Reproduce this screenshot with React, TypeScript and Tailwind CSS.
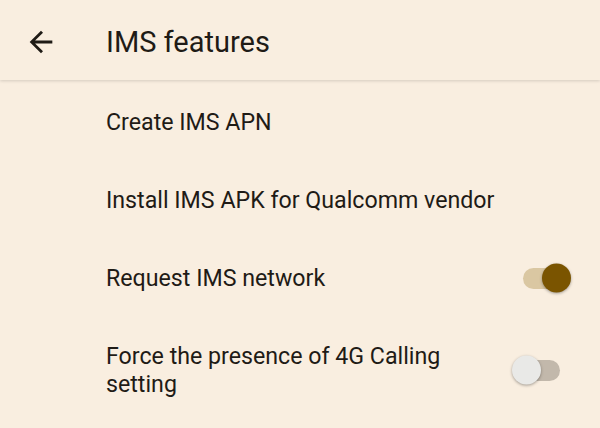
import React from 'react';

const rows = [
  { label: 'Create IMS APN' },
  { label: 'Install IMS APK for Qualcomm vendor' },
  { label: 'Request IMS network', toggle: true, on: true },
  { label: 'Force the presence of 4G Calling setting', toggle: true, on: false },
];

const Toggle: React.FC<{ on: boolean }> = ({ on }) => (
  <div className="relative w-[37px] h-[21px] shrink-0">
    <div className={`absolute inset-0 rounded-full ${on ? 'bg-[#dac7a2]' : 'bg-[#c2b8ab]'}`} />
    <div
      className={`absolute top-1/2 -translate-y-1/2 w-[29px] h-[29px] rounded-full shadow-[0_1px_3px_rgba(0,0,0,0.35)] ${
        on ? 'right-[-11px] bg-[#7a5400]' : 'left-[-11px] bg-[#e9e9e7]'
      }`}
    />
  </div>
);

export default function App() {
  return (
    <div className="w-[600px] h-[428px] overflow-hidden bg-[#f9eee0] text-[#1f1b16]" style={{ fontFamily: 'Roboto, "Noto Sans", sans-serif' }}>
      <header className="h-[80px] pt-[4px] flex items-center shadow-[0_1px_3px_rgba(0,0,0,0.15)] relative z-10 bg-[#f9eee0]">
        <div className="w-[106px] pl-[24px] flex">
          <svg width="34" height="34" viewBox="0 0 24 24" fill="#1f1b16">
            <path d="M20 11H7.83l5.59-5.59L12 4l-8 8 8 8 1.41-1.41L7.83 13H20v-2z" />
          </svg>
        </div>
        <h1 className="text-[29px] leading-none">IMS features</h1>
      </header>
      <div className="flex flex-col pt-[3px]">
        {rows.map((r) => (
          <div key={r.label} className="py-[25px] flex items-center pl-[106px] pr-[40px]">
            <div className="flex-1 text-[23.2px] leading-[28px] pr-[60px]">{r.label}</div>
            {r.toggle && <Toggle on={!!r.on} />}
          </div>
        ))}
      </div>
    </div>
  );
}
